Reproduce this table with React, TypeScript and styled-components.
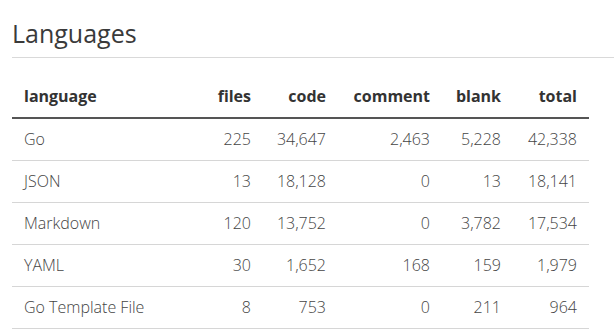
import React from "react";
import styled, { createGlobalStyle } from "styled-components";

const GlobalStyle = createGlobalStyle`
  body {
    margin: 0;
    background: #fff;
    font-family: "Open Sans", "Noto Sans", sans-serif;
    color: #333;
  }
`;

const Section = styled.section`
  padding: 12px 0 0 12px;
`;

const Title = styled.h2`
  margin: 0;
  padding: 5px 0 8px;
  font-size: 25px;
  font-weight: 400;
  line-height: 32px;
  color: #3a3a3a;
  border-bottom: 1px solid #d9d9d9;
`;

const Table = styled.table`
  width: 577px;
  margin-top: 18px;
  border-collapse: collapse;
  font-size: 16px;
`;

const Head = styled.th<{ $left?: boolean }>`
  padding: 9px 12px;
  line-height: 22.5px;
  text-align: ${(p) => (p.$left ? "left" : "right")};
  font-weight: 700;
  color: #333;
  border-bottom: 2px solid #555;
`;

const Cell = styled.td<{ $left?: boolean }>`
  padding: 9px 12px;
  line-height: 23px;
  text-align: ${(p) => (p.$left ? "left" : "right")};
  font-weight: 300;
  color: #444;
  border-bottom: 1px solid #d6d6d6;
`;

type Row = [string, number, number, number, number, number];

const rows: Row[] = [
  ["Go", 225, 34647, 2463, 5228, 42338],
  ["JSON", 13, 18128, 0, 13, 18141],
  ["Markdown", 120, 13752, 0, 3782, 17534],
  ["YAML", 30, 1652, 168, 159, 1979],
  ["Go Template File", 8, 753, 0, 211, 964],
];

const columns = ["files", "code", "comment", "blank", "total"];
const widths = [186, 65, 75, 104, 71, 76];

const fmt = (n: number) => n.toLocaleString("en-US");

export default function App() {
  return (
    <>
      <GlobalStyle />
      <Section>
        <Title>Languages</Title>
        <Table>
          <colgroup>
            {widths.map((w, i) => (
              <col key={i} style={{ width: w }} />
            ))}
          </colgroup>
          <thead>
            <tr>
              <Head $left>language</Head>
              {columns.map((c) => (
                <Head key={c}>{c}</Head>
              ))}
            </tr>
          </thead>
          <tbody>
            {rows.map(([name, ...nums]) => (
              <tr key={name}>
                <Cell $left>{name}</Cell>
                {nums.map((n, i) => (
                  <Cell key={i}>{fmt(n)}</Cell>
                ))}
              </tr>
            ))}
          </tbody>
        </Table>
      </Section>
    </>
  );
}
